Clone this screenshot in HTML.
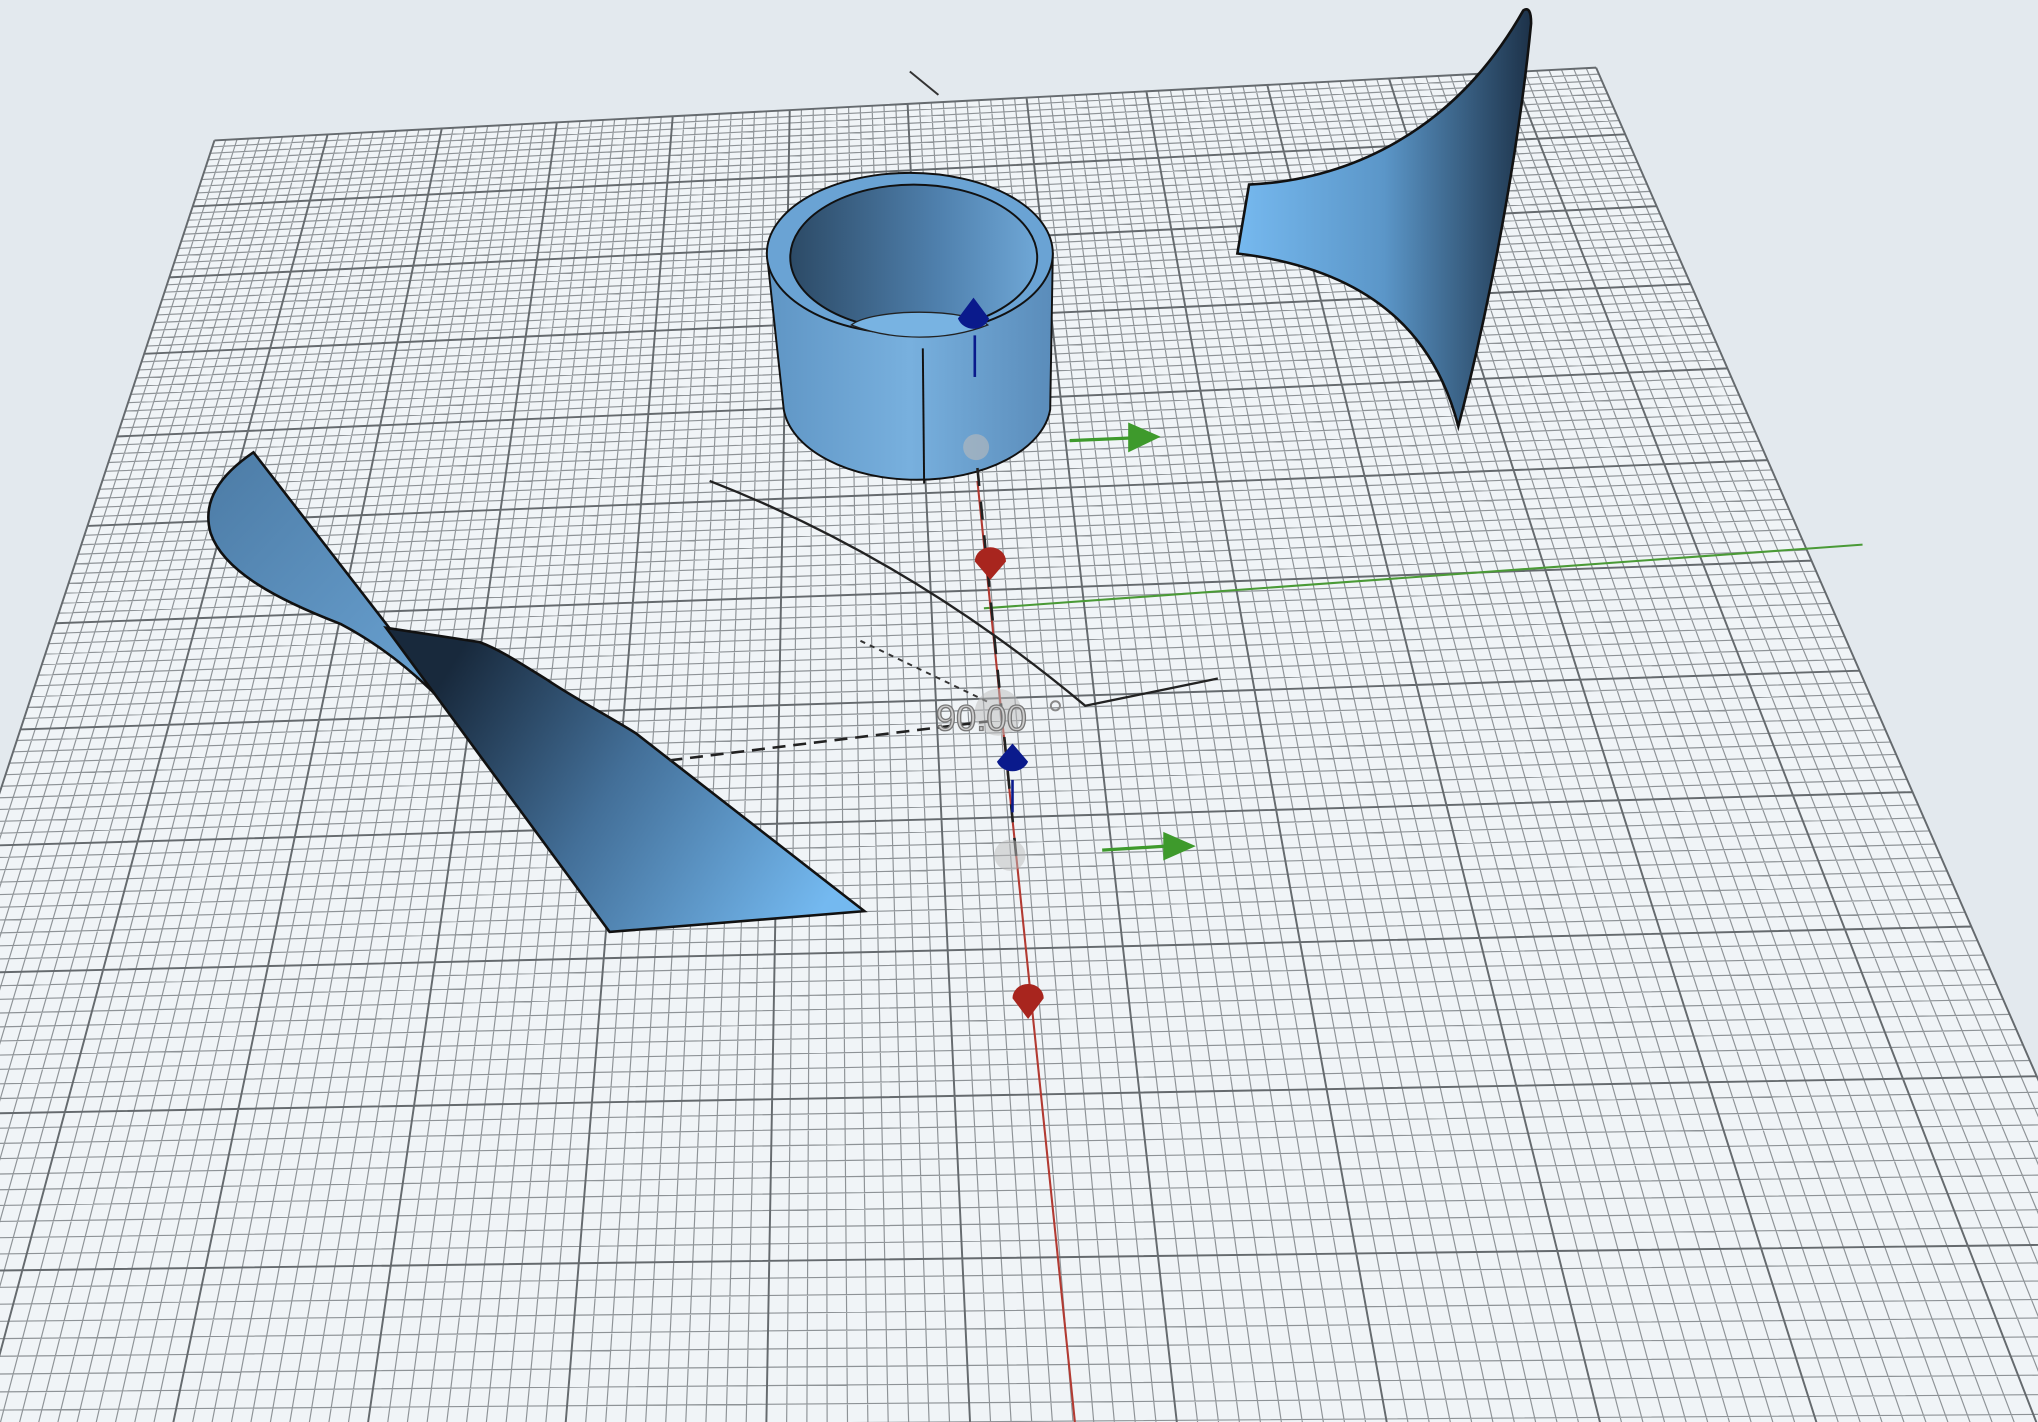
<!DOCTYPE html>
<html><head><meta charset="utf-8"><style>
html,body{margin:0;padding:0;background:#e3e9ee;overflow:hidden;width:2038px;height:1422px}
svg{display:block;overflow:hidden}
</style></head><body>
<svg id="s" width="2038" height="1422" viewBox="0 0 1568 1094" xmlns="http://www.w3.org/2000/svg">
<defs>
<linearGradient id="cyl" x1="0" x2="1" y1="0" y2="0">
<stop offset="0" stop-color="#5f95c4"/><stop offset="0.5" stop-color="#78b0de"/><stop offset="1" stop-color="#5a8cba"/></linearGradient>
<linearGradient id="inner" x1="0" x2="1" y1="0" y2="0">
<stop offset="0" stop-color="#2c4a66"/><stop offset="0.6" stop-color="#4f80ad"/><stop offset="1" stop-color="#6fa7d6"/></linearGradient>
<linearGradient id="horn" x1="0" x2="1" y1="0" y2="0">
<stop offset="0" stop-color="#76b9ef"/><stop offset="0.5" stop-color="#5b96c8"/><stop offset="0.85" stop-color="#2f506f"/><stop offset="1" stop-color="#1d3249"/></linearGradient>
<linearGradient id="tw1" x1="0" x2="1" y1="0" y2="1">
<stop offset="0" stop-color="#4c7ba5"/><stop offset="1" stop-color="#6fa9da"/></linearGradient>
<linearGradient id="tw2" gradientUnits="userSpaceOnUse" x1="330" y1="540" x2="620" y2="720">
<stop offset="0" stop-color="#18293c"/><stop offset="0.45" stop-color="#436f98"/><stop offset="1" stop-color="#74b9f0"/></linearGradient>
</defs>
<rect width="1568" height="1094" fill="#e3e9ee"/>
<g id="grid"></g>
<path d="M700 55 L722 73" stroke="#333" stroke-width="1.5"/>
<!-- cylinder -->
<path d="M590 195 L603 315 A103 60 0 0 0 808 315 L810 195 Z" fill="url(#cyl)" stroke="#111" stroke-width="1.5"/>
<ellipse cx="700" cy="195" rx="110" ry="62" fill="#6aa3d4" stroke="#111" stroke-width="1.5"/>
<ellipse cx="703" cy="198" rx="95" ry="56" fill="url(#inner)" stroke="#111" stroke-width="1.5"/>
<path d="M655 250 A55 14 0 0 1 760 250 A95 56 0 0 1 655 250 Z" fill="#78b3e2" stroke="#222" stroke-width="1"/>
<path d="M710 268 L711 372" stroke="#111" stroke-width="1.5"/>
<!-- horn -->
<path d="M961 142 C1040 138 1120 100 1172 8 Q1178 4 1178 18 C1168 120 1145 240 1122 328 C1105 262 1060 208 952 195 Z" fill="url(#horn)" stroke="#111" stroke-width="2"/>
<!-- twisted -->
<path d="M195 348 C170 365 155 385 162 410 C172 440 215 462 262 480 C300 500 335 530 366 569 Z" fill="url(#tw1)" stroke="#111" stroke-width="2"/>
<path d="M297 483 L369 494 C385 500 400 510 421 523 C440 536 470 552 489 564 L665 701 L469 717 Z" fill="url(#tw2)" stroke="#111" stroke-width="2"/>
<!-- lines -->
<path d="M757 468 L1433 419" stroke="#4a9a36" stroke-width="1.6"/>
<path d="M752 370 L827 1094" stroke="#b23a32" stroke-width="1.6"/>
<path d="M546 370 Q700 430 835 543 L937 522" stroke="#222" stroke-width="1.8" fill="none"/>
<path d="M515 585 L760 555" stroke="#222" stroke-width="2" stroke-dasharray="10 6"/>
<path d="M662 493 L760 540" stroke="#333" stroke-width="1.5" stroke-dasharray="4 4"/>
<path d="M752 360 L782 660" stroke="#222" stroke-width="2" stroke-dasharray="14 12"/>
<circle cx="768" cy="548" r="18" fill="#bbb" opacity="0.5"/>
<circle cx="751" cy="344" r="10" fill="#bbb" opacity="0.6"/>
<circle cx="777" cy="658" r="12" fill="#bbb" opacity="0.5"/>
<text x="720" y="562" font-family="Liberation Sans, sans-serif" font-size="28" fill="#ccc" stroke="#777" stroke-width="1">90.00</text>
<circle cx="812" cy="543" r="3.5" fill="none" stroke="#888" stroke-width="1.5"/>
<!-- gizmo -->
<path d="M750 290 L750 258" stroke="#0a1a8c" stroke-width="2"/>
<path d="M749 229 L737 245 A13 13 0 0 0 761 245 Z" fill="#0a1a8c"/>
<path d="M779 625 L779 600" stroke="#0a1a8c" stroke-width="2"/>
<path d="M779 572 L767 586 A13 12 0 0 0 791 586 Z" fill="#0a1a8c"/>
<path d="M762 446 L750 432 A12 11 0 0 1 774 432 Z" fill="#a8251e"/>
<path d="M791 784 L779 768 A12 11 0 0 1 803 768 Z" fill="#a8251e"/>
<path d="M823 339 L870 337" stroke="#3e9a2c" stroke-width="2.5"/>
<path d="M868 325 L893 336 L868 348 Z" fill="#3e9a2c"/>
<path d="M848 654 L897 651" stroke="#3e9a2c" stroke-width="2.5"/>
<path d="M895 640 L920 651 L895 662 Z" fill="#3e9a2c"/>
</svg>
<script>
(function(){
function solve(A,b){var n=b.length;for(var i=0;i<n;i++){var m=i;for(var k=i+1;k<n;k++)if(Math.abs(A[k][i])>Math.abs(A[m][i]))m=k;var t=A[i];A[i]=A[m];A[m]=t;var tb=b[i];b[i]=b[m];b[m]=tb;for(var k=i+1;k<n;k++){var f=A[k][i]/A[i][i];for(var j=i;j<n;j++)A[k][j]-=f*A[i][j];b[k]-=f*b[i];}}var x=new Array(n);for(var i=n-1;i>=0;i--){var s=b[i];for(var j=i+1;j<n;j++)s-=A[i][j]*x[j];x[i]=s/A[i][i];}return x;}
var U=11.68,V=10;
var src=[[0,0],[U,0],[0,V],[U,V]],dst=[[165,108],[1228,52],[-82,858],[1567,828]];
var A=[],b=[];
for(var i=0;i<4;i++){var u=src[i][0],v=src[i][1],x=dst[i][0],y=dst[i][1];
A.push([u,v,1,0,0,0,-u*x,-v*x]);b.push(x);A.push([0,0,0,u,v,1,-u*y,-v*y]);b.push(y);}
var h=solve(A,b);
function P(u,v){var w=h[6]*u+h[7]*v+1;return [(h[0]*u+h[1]*v+h[2])/w,(h[3]*u+h[4]*v+h[5])/w];}
var VM=16,s='';
var c=[P(0,0),P(U,0),P(U,VM),P(0,VM)];
s+='<polygon points="'+c.map(function(p){return p.join(",")}).join(" ")+'" fill="#f0f4f7"/>';
var minor='',major='';
for(var i=0;i<=Math.floor(U*10);i++){var u=i/10,a=P(u,0),e=P(u,VM);var l='M'+a[0].toFixed(1)+' '+a[1].toFixed(1)+'L'+e[0].toFixed(1)+' '+e[1].toFixed(1);if(i%10==0)major+=l;else minor+=l;}
for(var i=0;i<=VM*10;i++){var v=i/10,a=P(0,v),e=P(U,v);var l='M'+a[0].toFixed(1)+' '+a[1].toFixed(1)+'L'+e[0].toFixed(1)+' '+e[1].toFixed(1);if(i%10==0)major+=l;else minor+=l;}
var a=P(U,0),e=P(U,VM);major+='M'+a[0]+' '+a[1]+'L'+e[0]+' '+e[1];
s+='<path d="'+minor+'" stroke="#8e9397" stroke-width="0.9" fill="none"/>';
s+='<path d="'+major+'" stroke="#656a6e" stroke-width="1.5" fill="none"/>';
document.getElementById('grid').innerHTML=s;
})();
</script>
</body></html>
